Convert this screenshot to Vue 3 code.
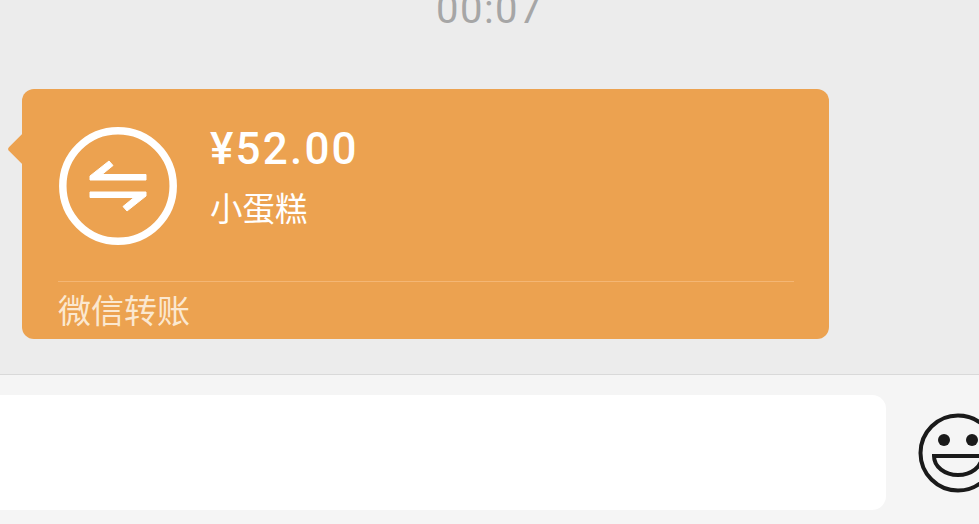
<template>
  <div class="page">
    <main class="chat">
      <div class="time">00:07</div>
      <div class="bubble">
        <div class="body">
          <svg class="transfer" viewBox="0 0 118 118">
            <circle cx="59" cy="59" r="55.200" fill="none" stroke="#fff" stroke-width="7.500" />
            <path
              fill="#fff"
              stroke="#fff"
              stroke-width="1"
              stroke-linejoin="round"
              d="M31 53H87V47.500H43L54 38.500L50 34L31 49ZM87 65H31V70.500H75L64 79.500L68 84L87 69Z"
            />
          </svg>
          <div class="info">
            <div class="amount">¥52.00</div>
            <div class="note">小蛋糕</div>
          </div>
        </div>
        <div class="foot">微信转账</div>
      </div>
    </main>
    <footer class="bar">
      <div class="input"></div>
      <svg class="emoji" viewBox="0 0 80 80" fill="none" stroke="#1a1a1a">
        <circle cx="40" cy="40" r="37.500" stroke-width="4" />
        <circle cx="26" cy="27" r="6" fill="#1a1a1a" stroke="none" />
        <circle cx="54" cy="27" r="6" fill="#1a1a1a" stroke="none" />
        <path d="M16 43H64C64 54 53 62 40 62C27 62 16 54 16 43Z" stroke-width="4" />
      </svg>
    </footer>
  </div>
</template>

<script setup>
</script>

<style>
html,
body {
  margin: 0;
  overflow: hidden;
}
</style>

<style scoped>
.page {
  display: flex;
  flex-direction: column;
  width: 979px;
  height: 524px;
  overflow: hidden;
  font-family: "Roboto", "Noto Sans CJK SC", sans-serif;
}
.chat {
  height: 374px;
  flex: none;
  background: #ececec;
  overflow: hidden;
}
.time {
  margin-top: -20px;
  height: 109px;
  line-height: 59px;
  text-align: center;
  font-size: 40px;
  letter-spacing: 1.500px;
  color: #a6a6a6;
}
.bubble {
  position: relative;
  width: 807px;
  height: 250px;
  margin-left: 22px;
  box-sizing: border-box;
  padding: 38px 35px 0 36px;
  background: #eca250;
  border-radius: 12px;
}
.bubble::before {
  content: "";
  position: absolute;
  left: -10px;
  top: 48px;
  width: 24px;
  height: 24px;
  background: #eca250;
  border-radius: 3px;
  transform: rotate(45deg);
}
.body {
  display: flex;
  gap: 33px;
  height: 154px;
}
.transfer {
  width: 118px;
  height: 118px;
  margin-left: 1px;
  flex: none;
}
.info {
  color: #fff;
}
.amount {
  margin-top: -6px;
  font-size: 44px;
  line-height: 56px;
  font-weight: 500;
  letter-spacing: 2.200px;
}
.note {
  margin-top: 10px;
  font-size: 32.500px;
  line-height: 46px;
}
.foot {
  border-top: 1px solid #f4b674;
  padding-top: 2px;
  font-size: 33px;
  line-height: 56px;
  color: #fbe8d0;
}
.bar {
  flex: 1;
  display: flex;
  align-items: flex-start;
  border-top: 1px solid #d9d9d9;
  background: #f5f5f5;
}
.input {
  width: 886px;
  height: 115px;
  margin-top: 20px;
  flex: none;
  background: #fff;
  border-radius: 0 14px 14px 0;
}
.emoji {
  width: 80px;
  height: 80px;
  margin: 38px 0 0 32px;
  flex: none;
}
</style>
